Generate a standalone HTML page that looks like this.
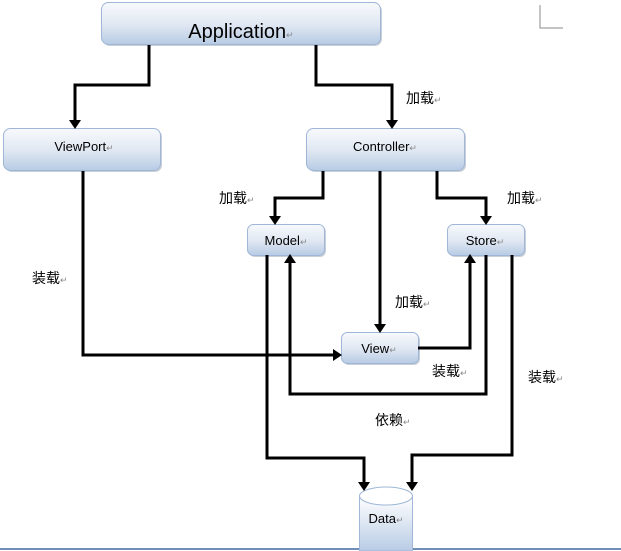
<!DOCTYPE html>
<html><head><meta charset="utf-8"><style>
html,body{margin:0;padding:0;background:#fff;width:621px;height:551px;overflow:hidden}
svg text{font-family:"Liberation Sans","Noto Sans CJK SC",sans-serif;fill:#000}
svg tspan.r{fill:#888;font-size:9px}
</style></head><body>
<svg width="621" height="551" viewBox="0 0 621 551" xmlns="http://www.w3.org/2000/svg">
<defs>
<linearGradient id="g" x1="0" y1="0" x2="0" y2="1">
<stop offset="0" stop-color="#f7f9fc"/><stop offset="0.5" stop-color="#e2e9f3"/><stop offset="1" stop-color="#b7cbe4"/>
</linearGradient>
<linearGradient id="c" x1="0" y1="0" x2="0" y2="1">
<stop offset="0" stop-color="#ffffff"/><stop offset="1" stop-color="#b9cce5"/>
</linearGradient>
</defs>
<path d="M540 5V28H563" stroke="#888" fill="none" stroke-width="1"/>
<line x1="0" y1="549" x2="621" y2="549" stroke="#6f8fb8" stroke-width="2"/>
<g fill="#c8cfd9">
<rect x="103" y="4" width="279" height="42" rx="7"/>
<rect x="5" y="130" width="157" height="42" rx="7"/>
<rect x="308" y="130" width="158" height="42" rx="7"/>
<rect x="249" y="226" width="77" height="31" rx="6"/>
<rect x="449" y="226" width="77" height="31" rx="6"/>
<rect x="343" y="334" width="77" height="31" rx="6"/>
</g>
<g fill="url(#g)" stroke="#9fb6d6" stroke-width="1">
<rect x="101.5" y="2.5" width="279" height="42" rx="7"/>
<rect x="3.5" y="128.5" width="157" height="42" rx="7"/>
<rect x="306.5" y="128.5" width="158" height="42" rx="7"/>
<rect x="247.5" y="224.5" width="77" height="31" rx="6"/>
<rect x="447.5" y="224.5" width="77" height="31" rx="6"/>
<rect x="341.5" y="332.5" width="77" height="31" rx="6"/>
</g>
<path d="M359.5 496V551H412.5V496" fill="url(#c)" stroke="#9fb6d6"/>
<ellipse cx="386" cy="496" rx="26.5" ry="9" fill="#fff" stroke="#9fb6d6"/>
<g stroke="#000" stroke-width="3" fill="none">
<path d="M149 45V85H75V122"/>
<path d="M316 45V85H392V122"/>
<path d="M323 171V198H275V218"/>
<path d="M380 171V326"/>
<path d="M437 171V198H486V218"/>
<path d="M83 171V355H335"/>
<path d="M418 348H470V261"/>
<path d="M486 255V394H290V261"/>
<path d="M267 255V458H364V484"/>
<path d="M512 255V455H412V484"/>
</g>
<g fill="#000">
<path d="M69 120H81L75 129Z"/>
<path d="M386 120H398L392 129Z"/>
<path d="M269 216H281L275 225Z"/>
<path d="M374 324H386L380 333Z"/>
<path d="M480 216H492L486 225Z"/>
<path d="M333 349V361L342 355Z"/>
<path d="M464 263H476L470 254Z"/>
<path d="M284 263H296L290 254Z"/>
<path d="M358 482H370L364 491Z"/>
<path d="M406 482H418L412 491Z"/>
</g>
<text x="241" y="38" font-size="20" text-anchor="middle">Application<tspan class="r">↵</tspan></text>
<text x="84" y="151" font-size="13" text-anchor="middle">ViewPort<tspan class="r">↵</tspan></text>
<text x="385" y="151" font-size="13" text-anchor="middle">Controller<tspan class="r">↵</tspan></text>
<text x="286" y="245" font-size="13" text-anchor="middle">Model<tspan class="r">↵</tspan></text>
<text x="485" y="245" font-size="13" text-anchor="middle">Store<tspan class="r">↵</tspan></text>
<text x="379" y="353" font-size="13" text-anchor="middle">View<tspan class="r">↵</tspan></text>
<text x="386" y="523" font-size="13" text-anchor="middle">Data<tspan class="r">↵</tspan></text>
<g font-size="14">
<text x="406" y="103">加载<tspan class="r">↵</tspan></text>
<text x="219" y="203">加载<tspan class="r">↵</tspan></text>
<text x="507" y="203">加载<tspan class="r">↵</tspan></text>
<text x="32" y="283">装载<tspan class="r">↵</tspan></text>
<text x="395" y="307">加载<tspan class="r">↵</tspan></text>
<text x="432" y="376">装载<tspan class="r">↵</tspan></text>
<text x="528" y="382">装载<tspan class="r">↵</tspan></text>
<text x="375" y="425">依赖<tspan class="r">↵</tspan></text>
</g>
</svg>
</body></html>
